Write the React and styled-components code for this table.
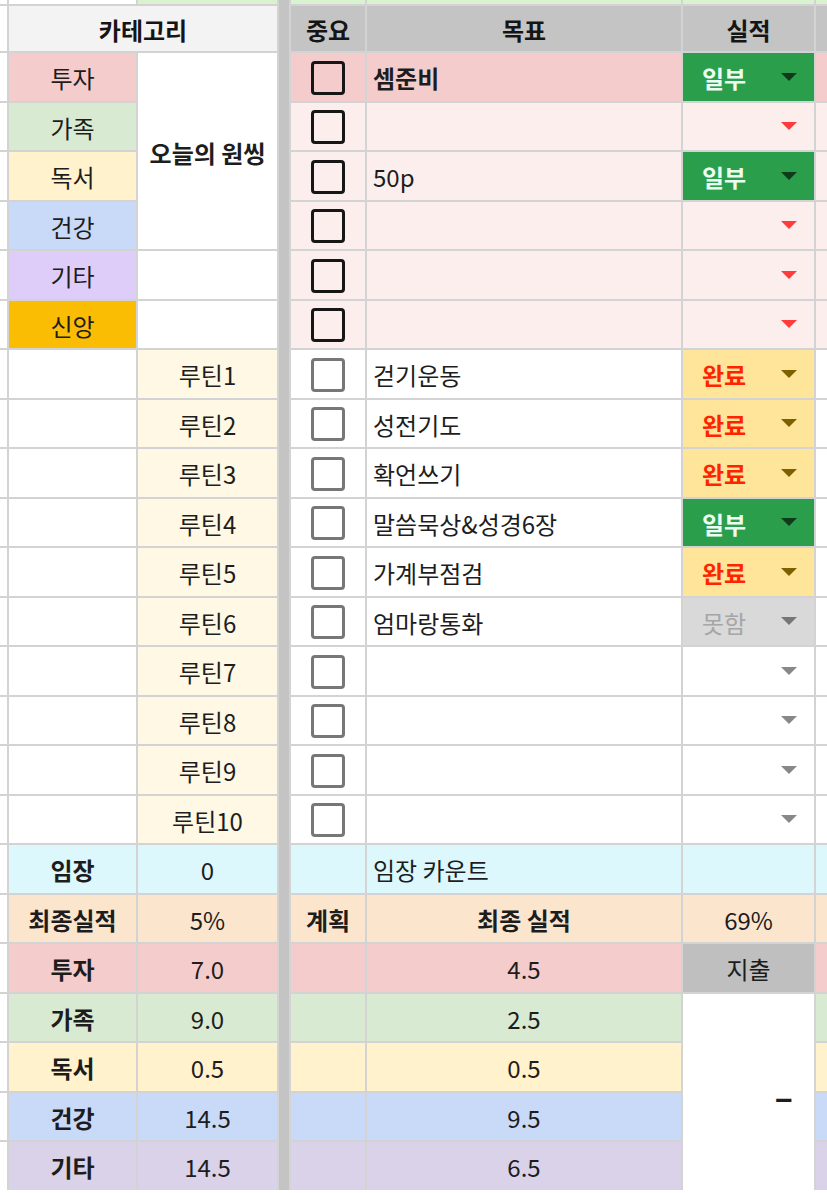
import React from 'react';
import styled, {createGlobalStyle} from 'styled-components';

const GlobalStyle = createGlobalStyle`
  body {
    margin: 0;
    background: #fff;
    font-family: "Noto Sans CJK KR", "Noto Sans", sans-serif;
  }
`

// Spreadsheet grid: gaps act as the gridlines
const Sheet = styled.div`
  display: grid;
  grid-template-columns: 7px 127px 139px 10px 74px 314px 131px 1fr;
  grid-template-rows: 4px 45px repeat(23, 47.5px);
  gap: 2px;
  width: 827px;
  background: #d3d3d3;
  font-family: "Noto Sans CJK KR", "Noto Sans", sans-serif;
`

const Freeze = styled.div`
  grid-column: 4;
  grid-row: 1 / -1;
  background: #c4c4c4;
`

const Cell = styled.div`
  display: flex;
  align-items: center;
  justify-content: ${p => p.$align || 'center'};
  padding: ${p => p.$align === 'flex-start' ? '2px 0 0 6px' : '2px 0 0'};
  background: ${p => p.$bg || '#fff'};
  color: ${p => p.$color || '#1d1d1d'};
  font-size: 24px;
  font-weight: ${p => p.$bold ? 700 : 400};
  white-space: nowrap;
  overflow: hidden;
  grid-row: ${p => p.$rows ? `span ${p.$rows}` : 'auto'};
  grid-column: ${p => p.$cols ? `span ${p.$cols}` : 'auto'};
`

const HeadCell = styled(Cell)`
  background: ${p => p.$bg || '#c4c4c4'};
  font-weight: 700;
  color: #151515;
`

const Checkbox = styled.span`
  box-sizing: border-box;
  width: 34px;
  height: 34px;
  border-radius: 4px;
  border: ${p => p.$strong ? '3.5px solid #161616' : '3px solid #777'};
`

const StatusCell = styled.div`
  display: flex;
  align-items: center;
  justify-content: space-between;
  padding: 2px 17px 0 19px;
  background: ${p => p.$bg};
  color: ${p => p.$color};
  font-size: 24px;
  font-weight: ${p => p.$bold ? 700 : 400};
`

const Arrow = styled.span`
  margin-left: auto;
  margin-bottom: 2px;
  width: 0;
  height: 0;
  border-left: 8px solid transparent;
  border-right: 8px solid transparent;
  border-top: 8px solid ${p => p.$color};
`

const Dash = styled(Cell)`
  justify-content: flex-end;
  padding: 8px 21px 0 0;
  font-size: 34px;
  font-weight: 700;
`

const CATS = [
  {name: '투자', bg: '#f4cccc'},
  {name: '가족', bg: '#d9ead3'},
  {name: '독서', bg: '#fff2cc'},
  {name: '건강', bg: '#c9daf8'},
  {name: '기타', bg: '#dfcdf9'},
  {name: '신앙', bg: '#fbbc04'},
]

const PRIORITY = [
  {goal: '셈준비', status: 'part', strong: true, bg: '#f4cccc'},
  {goal: '', bg: '#fdeeee'},
  {goal: '50p', status: 'part', bg: '#fdeeee'},
  {goal: '', bg: '#fdeeee'},
  {goal: '', bg: '#fdeeee'},
  {goal: '', bg: '#fdeeee'},
]

const ROUTINES = [
  {goal: '걷기운동', status: 'done'},
  {goal: '성전기도', status: 'done'},
  {goal: '확언쓰기', status: 'done'},
  {goal: '말씀묵상&성경6장', status: 'part'},
  {goal: '가계부점검', status: 'done'},
  {goal: '엄마랑통화', status: 'miss'},
  {goal: ''}, {goal: ''}, {goal: ''}, {goal: ''},
]

const TOTALS = [
  {name: '투자', bg: '#f4cccc', plan: '7.0', result: '4.5'},
  {name: '가족', bg: '#d9ead3', plan: '9.0', result: '2.5'},
  {name: '독서', bg: '#fff2cc', plan: '0.5', result: '0.5'},
  {name: '건강', bg: '#c9daf8', plan: '14.5', result: '9.5'},
  {name: '기타', bg: '#d9d2e9', plan: '14.5', result: '6.5'},
]

const STATUS = {
  part: {label: '일부', bg: '#2b9e4b', color: '#ecfff3', arrow: '#0f3b1c', bold: true},
  done: {label: '완료', bg: '#ffe599', color: '#ff2400', arrow: '#7f6000', bold: true},
  miss: {label: '못함', bg: '#d9d9d9', color: '#a6a6a6', arrow: '#767676'},
}

const Status = ({status, bg, empty}) => {
  const s = STATUS[status]
  if (!s) {
    return (
      <StatusCell $bg={bg || '#fff'}>
        <Arrow $color={empty} />
      </StatusCell>
    )
  }
  return (
    <StatusCell $bg={s.bg} $color={s.color} $bold={s.bold}>
      {s.label}
      <Arrow $color={s.arrow} />
    </StatusCell>
  )
}

const App = () => {
  return (
    <Sheet>
      <GlobalStyle/>
      <Freeze/>

      {/* top strip */}
      <Cell/>
      <Cell/>
      <Cell $bg="#d9f2d0"/>
      <Cell $bg="#d9f2d0"/>
      <Cell $bg="#d9f2d0"/>
      <Cell $bg="#d9f2d0"/>
      <Cell $bg="#d9f2d0"/>

      {/* header */}
      <Cell/>
      <HeadCell $cols={2} $bg="#f3f3f3">카테고리</HeadCell>
      <HeadCell>중요</HeadCell>
      <HeadCell>목표</HeadCell>
      <HeadCell>실적</HeadCell>
      <HeadCell/>

      {/* one thing */}
      {PRIORITY.map((row, i) => (
        <React.Fragment key={'p' + i}>
          <Cell/>
          <Cell $bg={CATS[i].bg}>{CATS[i].name}</Cell>
          {i === 0 && <Cell $rows={4} $bold>오늘의 원씽</Cell>}
          {i > 3 && <Cell/>}
          <Cell $bg={row.bg}><Checkbox $strong/></Cell>
          <Cell $bg={row.bg} $align="flex-start" $bold={row.strong}>{row.goal}</Cell>
          <Status status={row.status} bg={row.bg} empty="#ff3b3b"/>
          <Cell $bg={row.bg}/>
        </React.Fragment>
      ))}

      {/* routines */}
      {ROUTINES.map((row, i) => (
        <React.Fragment key={'r' + i}>
          <Cell/>
          <Cell/>
          <Cell $bg="#fef8e5">루틴{i + 1}</Cell>
          <Cell><Checkbox/></Cell>
          <Cell $align="flex-start">{row.goal}</Cell>
          <Status status={row.status} empty="#888"/>
          <Cell/>
        </React.Fragment>
      ))}

      {/* 임장 */}
      <Cell/>
      <Cell $bg="#dcf8fd" $bold>임장</Cell>
      <Cell $bg="#dcf8fd">0</Cell>
      <Cell $bg="#dcf8fd"/>
      <Cell $bg="#dcf8fd" $align="flex-start">임장 카운트</Cell>
      <Cell $bg="#dcf8fd"/>
      <Cell $bg="#dcf8fd"/>

      {/* 최종 실적 */}
      <Cell/>
      <Cell $bg="#fce5cd" $bold>최종실적</Cell>
      <Cell $bg="#fce5cd">5%</Cell>
      <Cell $bg="#fce5cd" $bold>계획</Cell>
      <Cell $bg="#fce5cd" $bold>최종 실적</Cell>
      <Cell $bg="#fce5cd">69%</Cell>
      <Cell $bg="#fce5cd"/>

      {TOTALS.map((row, i) => (
        <React.Fragment key={'t' + i}>
          <Cell/>
          <Cell $bg={row.bg} $bold>{row.name}</Cell>
          <Cell $bg={row.bg}>{row.plan}</Cell>
          <Cell $bg={row.bg}/>
          <Cell $bg={row.bg}>{row.result}</Cell>
          {i === 0 && <Cell $bg="#bfbfbf">지출</Cell>}
          {i === 1 && <Dash $rows={4}>–</Dash>}
          <Cell $bg={row.bg}/>
        </React.Fragment>
      ))}
    </Sheet>
  );
};

export default App;
